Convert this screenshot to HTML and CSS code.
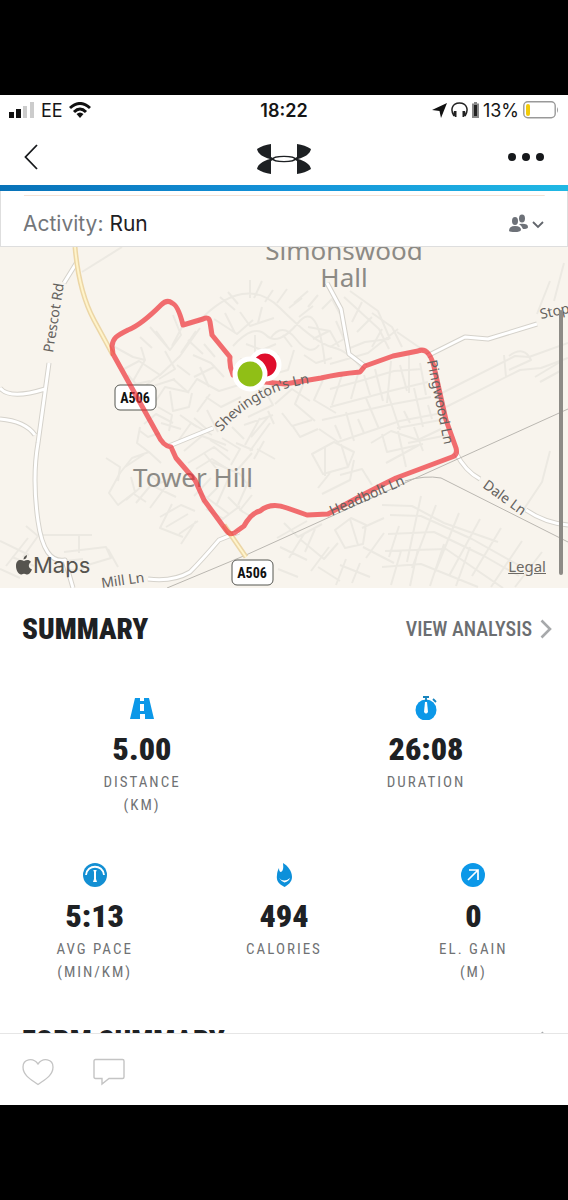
FILE: index.html
```html
<!DOCTYPE html>
<html lang="en">
<head>
<meta charset="utf-8">
<meta name="viewport" content="width=device-width, initial-scale=1">
<title>Run summary</title>
<link rel="stylesheet" href="styles.css">
</head>
<body>
<div class="app">
  <header class="top">
    <div class="status">
      <div class="status-side">
        <svg width="26" height="16" viewBox="0 0 26 16" aria-hidden="true"><path d="M0 10h5v6H0zM7 7h5v9H7z" fill="#111"/><path d="M14 4h4v12h-4zM21 0h4v16h-4z" fill="#ccc"/></svg>
        <span>EE</span>
        <svg class="wifi" width="22" height="16" viewBox="0 0 22 16" aria-hidden="true"><g fill="none" stroke="#111" stroke-width="3"><path d="M1 6Q11-3 21 6"/><path d="M5 10Q11 4 17 10"/></g><path d="M7.500 12Q11 9 14.500 12L11 16z" fill="#111"/></svg>
      </div>
      <time class="clock">18:22</time>
      <div class="status-side status-right">
        <svg width="15" height="15" viewBox="0 0 15 15" aria-hidden="true"><path d="M15 0L9 15 7.500 8 0 7z" fill="#111"/></svg>
        <svg width="17" height="16" viewBox="0 0 17 16" aria-hidden="true"><path d="M3 14C-1 8 1 1 8.500 1S18 8 14 14" fill="none" stroke="#222" stroke-width="1.500"/><path d="M3 9h2.500v6H4L2 12zM14 9h-2.500v6H13l2-3z" fill="#222"/></svg>
        <svg width="7" height="16" viewBox="0 0 7 16" aria-hidden="true"><path d="M2 0h3v1.500h2V16H0V1.500h2z" fill="#888"/><path d="M2 3h3v11H2z" fill="#222"/></svg>
        <span>13%</span>
        <svg width="36" height="18" viewBox="0 0 36 18" aria-hidden="true"><rect x=".8" y=".8" width="31.400" height="16" rx="4" fill="#fff" stroke="#999" stroke-width="1.400"/><rect x="3" y="3" width="4" height="12" rx="2" fill="#f2cb0a"/><path d="M34 6q2 3 0 6z" fill="#999"/></svg>
      </div>
    </div>
    <nav class="nav">
      <button class="icon-button" aria-label="Back"><svg width="14" height="26" viewBox="0 0 14 26"><path d="M13 1L1.500 13 13 25" fill="none" stroke="#16181b" stroke-width="1.800"/></svg></button>
      <svg class="logo" width="54" height="32" viewBox="0 0 54 32" role="img" aria-label="Under Armour"><path d="M14 1Q6 2 0 6C1 11 6 14 13 16 6 18 1 21 0 26Q6 30 14 31V18L18 16 14 14zM40 1Q48 2 54 6C53 11 48 14 41 16 48 18 53 21 54 26Q48 30 40 31V18L36 16 40 14z" fill="#1d2023"/><ellipse cx="27" cy="16" rx="11" ry="2.600" fill="none" stroke="#1d2023" stroke-width="1.300"/></svg>
      <button class="icon-button" aria-label="More options"><svg width="36" height="8" viewBox="0 0 36 8"><g fill="#16181b"><circle cx="4" cy="4" r="4"/><circle cx="18" cy="4" r="4"/><circle cx="32" cy="4" r="4"/></g></svg></button>
    </nav>
  </header>

  <main class="content">
    <section class="activity">
      <p class="activity-name"><span>Activity:</span> Run</p>
      <button class="icon-button" aria-label="Who can see this"><svg width="36" height="20" viewBox="0 0 36 20"><g fill="#6d7178"><ellipse cx="7" cy="7" rx="3" ry="4"/><ellipse cx="14" cy="4.500" rx="3" ry="4"/><path d="M1 17Q1 12 7 12T13 16Q12 18 7 18T1 17zM11 10q9-1 9 3 0 2-5 2-1-3-4-5z"/></g><path d="M25 8l5 5 5-5" fill="none" stroke="#62666c" stroke-width="1.800"/></svg></button>
    </section>

    <section class="map" aria-label="Route map">
      <svg class="map-art" viewBox="0 0 568 341">
        <defs>
          <path id="shevington" d="M221 185Q258 143 312 136"/>
          <path id="pingwood" d="M427 114L446 206"/>
          <path id="headbolt" d="M332 269L408 236"/>
        </defs>
        <g class="minor">
          <path d="M82 25L122 0M113 99l20 11 12 3M124 122l15-8 21 14 20-19 20-28M133 134l12-21-4-13M140 90l12 11M156 84l11 15M150 80l20 23 11-15-8-20M182 80l-10 19M188 93l15 14M177 118l13 10M160 128l-14 10M165 104l10 18-16 10M194 130l20-10M150 140l25-8M155 155l10-15 23 5 9-13 22 12 20-6"/>
          <path d="M128 128l8 9 14-3M170 144l3 20 16-4 3-14M158 160l14 8-3 16M180 168l17 12M200 120l9 20M193 108l18 8 13 14M204 97l11 13M196 84l-15 22M173 132l16 14M206 150l15 10 20-10M197 165l13-18M161 176l20 6"/>
          <path d="M198 75Q245 26 280 61T332 100 362 122M220 50l15 13M228 45l10 12M250 33v18M262 34l-8 17M273 43l-8 12M287 42l-10 14M289 61l13-10M299 70l14-11M214 72l23 15 16-14M225 66l10 20M233 99Q254 76 266 88T298 76 325 117M255 88v28M270 92q12-18 26 0t23 6M278 107l-10 17M294 103l-6 20-22 6M322 62l10-10 8 15M350 44l28 20 12 28M344 50l35 32 10 20M362 55l-10 20M372 70l-15 15M382 82l-10 18M330 117l38-11 30-24M397 85l26 18"/>
          <path d="M240 65l10 14 24-8M262 60l-4 16M308 80l22 4 9 16M313 92l16-8M246 97l16 6 14-6M304 108l12 8 16-5M283 88l9 12M336 74l8 18-14 8M318 48l-10 12M308 44l-14 12M240 112l20 4 10 9M345 103l20-8 24-3M402 100l-10-20-20-14"/>
          <path d="M263 140l10 18-25 12M275 157l17-15 18 12M303 138l-8 19 20 17M323 133l-9 20 22 13M342 128l-10 30M358 127l-7 25M375 122l8 32M391 114l-4 42M409 108v38M330 160l64-17 34-8M322 173l71-16 38-7M319 182l19 13 62-21 42-8M346 165l8 29M366 151l13 31M388 147l12 36M414 141l9 39M397 181l49-9M408 196l40-8"/>
          <path d="M330 142l30-8 34-10 28-2M364 128l6 20M400 118l7 26M420 116l6 32M282 166l10 13 20-6M292 178l8 12 18-8M268 164l6 13M335 178l6 14M358 172l6 14M404 164l6 12M428 158l4 14"/>
          <path d="M144 177l12-10 17 9M140 180l-3 16 12 9-17 6-12 15-11 20 9 12 17-13-4-15M125 220l24-16M149 205l12 11M136 256l15-18 25 12M142 239l-16 14M150 261l17-23M160 270l21-12 14 6M172 257l-12 24 23 9M188 267l-22 13M179 287l19-13M181 297l15-23M199 245l30 22M211 231l-17 18M218 240l-16 16M230 228l-14 31M240 259l-20 15M250 231l-12 27M184 204l18-15 24 9M188 216l26-16 16 13M176 197l15-21 21 12M194 171l16 14M207 163l11 22M244 178l29-10M260 171l-15 27M251 190l17-20M257 202l18 10M270 176l-20 28M236 196l17 7M212 215l28 12 11 15"/>
          <path d="M106 211l14 9-2 14M140 184l8 6 12-4M196 222l16-10 14 9M204 206l12 15M222 191l18 11-9 16M228 204l-18-11M238 222l14-16M232 180l12 12M264 194l-10 18M150 228l10 8 12-5M134 247l12 8M206 262l18 10M228 250l15 15M252 248l-12 15 10 6"/>
          <path d="M312 207l22-12 20 10-6 15-25 7zM325 200v29M341 197l7 23M340 228l22-6 10 16M322 247l28-14 4-20M330 226l-12 15M371 196l20-12 27 9 23-11M382 187l5 18 36-8M398 184l8 36M414 180l9 24M386 216l33-18"/>
          <path d="M335 283l16-12 15 7-3 19-18 4zM350 272l8 26M362 281l22-10M277 291l30-17M284 276l14 14 24-13M289 311l15-24M280 300l27 13M301 293l23 19 14-16M315 282l-10 23M329 300l-18 24M363 300l31 16M384 286l-18 25M399 279l-10 31M382 258l30 1 32 17 54 19M390 268l31 1 51 23 48 27M388 287l46-2 50 24 35 20M385 304l61-2 57 39M382 320l39-3 57 23M421 249l-14 66M436 258l-24 63M459 266l-24 59M480 272l-31 57M501 281l-29 48M522 294l-31 46M542 305l-27 35M391 338l10-34M410 339l8-37M430 339l14-42M456 339l14-39"/>
          <path d="M26 279l12 10-15 21M0 294l29 14M6 319l22-28M43 288h49M79 288v18M64 305l42-5 5 11-30 9M57 315l26-3M46 325l38-3M0 322l20 9M12 310l22 9M108 302l10 18M318 320l22 14M346 312l-10 26M360 316l-8 20M340 318l30 12M278 322l20 8"/>
          <path d="M438 148l77-39 14 1 39-14M446 160l74-37 21-2 27-10M504 108l2 22M509 109q15-11 22 4l-22 10M554 54l10-38M560 115l-25 15M562 123l-22 12M550 34l-13 33M550 204l-8 31-20 30"/>
        </g>
        <g class="road-edge">
          <path d="M77 15L64 36M49 116L38 196Q32 231 38 274T65 313L73 341M0 141Q10 153 45 142M0 172Q25 174 35 188M327 36L341 62 349 107 366 120M427 109L465 90 488 92 537 77M169 199L213 181M456 206Q465 224 480 232M526 263Q545 276 568 278M148 332Q173 335 190 325 202 313 219 293L239 285"/>
        </g>
        <g class="road">
          <path d="M77 15L64 36M49 116L38 196Q32 231 38 274T65 313L73 341M0 141Q10 153 45 142M0 172Q25 174 35 188M327 36L341 62 349 107 366 120M427 109L465 90 488 92 537 77M169 199L213 181M456 206Q465 224 480 232M526 263Q545 276 568 278M148 332Q173 335 190 325 202 313 219 293L239 285"/>
        </g>
        <path class="rail" d="M167 341L246 308 568 162M405 234Q425 228 441 231L568 295"/>
        <path class="main-edge" d="M75 0Q79 45 94 73L113 108M224 278L246 310"/>
        <path class="main-road" d="M75 0Q79 45 94 73L113 108M224 278L246 310"/>
        <g class="badge">
          <rect x="115" y="138" width="41" height="25" rx="5"/><text x="135" y="156">A506</text>
          <rect x="232" y="313" width="41" height="25" rx="5"/><text x="252" y="331">A506</text>
        </g>
        <g class="place"><text x="344" y="13">Simonswood</text><text x="344" y="40">Hall</text><text x="193" y="240">Tower Hill</text></g>
        <path class="route" d="M233 128Q229 119 230 110L212 88 210 75Q209 69 203 72L183 78Q178 58 172 56 167 52 161 58 141 78 128 83C116 89 113 91 112 99L113 107 158 188Q163 199 171 200L176 211 195 233 204 253 226 283Q231 290 237 284L244 279Q251 266 260 264 271 255 287 261L307 268 328 267Q365 246 396 231L452 210Q458 208 456 201L446 173 435 124Q430 99 418 104L393 109 365 119 360 125Q338 127 321 131L285 137 254 134"/>
        <g class="road-name">
          <text transform="translate(53 106) rotate(-81)">Prescot Rd</text>
          <text><textPath href="#shevington">Shevington's Ln</textPath></text>
          <text><textPath href="#pingwood">Pingwood Ln</textPath></text>
          <text><textPath href="#headbolt">Headbolt Ln</textPath></text>
          <text transform="translate(482 240) rotate(36)">Dale Ln</text>
          <text transform="translate(102 341) rotate(-8)">Mill Ln</text>
          <text transform="translate(541 72) rotate(-12)">Stop</text>
        </g>
        <g class="pins"><circle cx="265" cy="118" r="14" fill="#df0d2c"/><circle cx="250" cy="127" r="15" fill="#90bf16"/></g>
      </svg>
      <div class="map-credit"><svg width="16" height="20" viewBox="0 0 16 20" aria-hidden="true"><path d="M11 0Q11 4 7.500 4.500 7.500 1 11 0zM8 6C10 5 13 4 15 7 12 9 12 13 16 14.500 14 19 12 20 10.500 19.500 8.500 18.500 7.500 18.500 5.500 19.500 3 20 0 16 0 11 0 5 4 4 8 6z" fill="#56544f"/></svg><span>Maps</span></div>
      <a class="legal" href="#legal">Legal</a>
      <span class="thumb"></span>
    </section>

    <section class="summary">
      <div class="section-head">
        <h2>SUMMARY</h2>
        <a class="analysis" href="#analysis">VIEW ANALYSIS <svg width="12" height="20" viewBox="0 0 12 20" aria-hidden="true"><path d="M1.500 1.500L10 10 1.500 18.500" fill="none" stroke="#a7a9ab" stroke-width="2.600"/></svg></a>
      </div>
      <div class="stats">
        <div class="stat">
          <svg width="24" height="24" viewBox="0 0 24 24" aria-hidden="true"><path fill="#0c98e8" fill-rule="evenodd" d="M5 2H10V5H14V2H19L24 23H15V18H10V23H0zM10 8V15H14V8z"/></svg>
          <strong>5.00</strong><p>DISTANCE<br>(KM)</p>
        </div>
        <div class="stat">
          <svg width="24" height="24" viewBox="0 0 24 24" aria-hidden="true"><circle cx="12" cy="14" r="10.500" fill="#0c98e8"/><path d="M9 1h6M12 1v4M19 3l3 3" fill="none" stroke="#1683bd" stroke-width="1.800"/><path d="M11 6h2l1 10q-2 3-4 0z" fill="#fff"/></svg>
          <strong>26:08</strong><p>DURATION</p>
        </div>
      </div>
      <div class="stats">
        <div class="stat">
          <svg width="24" height="24" viewBox="0 0 24 24" aria-hidden="true"><circle cx="12" cy="12" r="12" fill="#138fd3"/><path d="M3 12C4 1 20 1 21 12" fill="none" stroke="#fff" stroke-width="1.800"/><path d="M10.300 7h3.400l-.7 2v7l1 3h-4l1-3V9z" fill="#fff"/></svg>
          <strong>5:13</strong><p>AVG PACE<br>(MIN/KM)</p>
        </div>
        <div class="stat">
          <svg width="24" height="24" viewBox="0 0 24 24" aria-hidden="true"><path d="M11 0C16 3 20 8 20 14 20 19 16 22 12.500 24 7 21 4 18 5 12 5 9 6 7 7 5Q7 9 9 9 12 8 11 0z" fill="#0d90da"/><path d="M7 15Q12 20 18 15 17 18 12.500 19.500 9 18 7 15z" fill="#fff"/></svg>
          <strong>494</strong><p>CALORIES</p>
        </div>
        <div class="stat">
          <svg width="24" height="24" viewBox="0 0 24 24" aria-hidden="true"><circle cx="12" cy="12" r="12" fill="#0c98e8"/><path d="M8 7h9v10M17 7L7 17" fill="none" stroke="#fff" stroke-width="1.700"/></svg>
          <strong>0</strong><p>EL. GAIN<br>(M)</p>
        </div>
      </div>
    </section>
    <section class="form">
      <div class="section-head"><h2>FORM SUMMARY</h2><svg width="12" height="20" viewBox="0 0 12 20" aria-hidden="true"><path d="M1.500 1.500L10 10 1.500 18.500" fill="none" stroke="#a7a9ab" stroke-width="2.600"/></svg></div>
    </section>
  </main>

  <footer class="actions">
    <button class="icon-button" aria-label="Like"><svg width="32" height="28" viewBox="0 0 32 28"><path d="M16 26.500C10 22 1 18 1 9 1 1 11-1 16 6 21-1 31 1 31 9 31 18 22 22 16 26.500z" fill="none" stroke="#c4c4c4" stroke-width="1.300"/></svg></button>
    <button class="icon-button" aria-label="Comment"><svg width="32" height="28" viewBox="0 0 32 28"><path d="M2.500 1.500h27q1.500 0 1.500 1.500v16q0 1.500-1.500 1.500H16L9 26v-5.500H2.500Q1 20.500 1 19V3q0-1.500 1.500-1.500z" fill="none" stroke="#c4c4c4" stroke-width="1.400"/></svg></button>
  </footer>
</div>
</body>
</html>
```

FILE: styles.css
```css
* { box-sizing: border-box; }
body {
  margin: 0;
  padding: 95px 0;
  height: 100vh;
  background: #000;
  color: #1e2124;
  font-family: Inter, "Liberation Sans", sans-serif;
}
h2, p { margin: 0; }
svg { display: block; flex: none; }
.app {
  display: flex;
  flex-direction: column;
  height: 100%;
  background: #fff;
}
.top { border-bottom: 6px solid; border-image: linear-gradient(90deg, #0872b8, #1492d8 50%, #20b8e4) 1; }
.status {
  display: grid;
  grid-template-columns: 1fr auto 1fr;
  align-items: center;
  height: 30px;
  padding: 0 9px;
  color: #161616;
  font-size: 18px;
}
.status-side { display: flex; align-items: center; gap: 6px; }
.status-right { justify-content: flex-end; gap: 4px; }
.clock { font-weight: 600; }
.nav {
  display: grid;
  grid-template-columns: 1fr auto 1fr;
  align-items: center;
  height: 60px;
  padding: 4px 24px 0;
}
.logo { margin-top: 4px; }
.nav .icon-button:last-child { justify-self: end; }
.nav .icon-button:first-child { justify-self: start; }
.icon-button { padding: 0; border: 0; background: none; }
.content { flex: 1; min-height: 0; overflow: hidden; }
.activity {
  display: flex;
  align-items: center;
  justify-content: space-between;
  height: 56px;
  padding: 10px 23px 0 22px;
  border: solid #dedede;
  border-width: 0 1px 1px;
  background: linear-gradient(#f4e2d6, #f4e2d6) center 4px / 92% 1px no-repeat;
}
.activity-name { font-size: 21px; }
.activity-name span { color: #73767a; }
.map { position: relative; overflow: hidden; background: #f8f4ed; }
.map-art { width: 100%; height: auto; }
.map-art path { fill: none; stroke-linejoin: round; }
.minor { stroke: #ece9e2; stroke-width: 2; }
.road-edge { stroke: #d5d2cb; stroke-width: 5; }
.road { stroke: #fff; stroke-width: 3; }
.rail { stroke: #bab7b1; stroke-width: 1; }
.main-edge { stroke: #ecd6a6; stroke-width: 5; }
.main-road { stroke: #fff4cb; stroke-width: 2; }
.route { stroke: #ee2b32; stroke-width: 5; stroke-opacity: .68; stroke-linecap: round; }
.badge rect { fill: #fff; stroke: #555651; stroke-width: 1; }
.badge text { fill: #111; font: bold 14px "Roboto Condensed", "Liberation Sans Narrow", Roboto, sans-serif; text-anchor: middle; }
.place { fill: #8c8a85; font: 26px "Noto Sans", sans-serif; text-anchor: middle; }
.road-name { fill: #65625e; font: 14px "Noto Sans", sans-serif; }
.pins circle { stroke: #fff; stroke-width: 5; }
.map-credit {
  position: absolute;
  bottom: 10px;
  left: 16px;
  display: flex;
  align-items: center;
  gap: 1px;
  color: #56544f;
  font-size: 22px;
}
.legal { position: absolute; right: 22px; bottom: 12px; color: #6d6a65; font: 15px/20px "Noto Sans", sans-serif; }
.thumb { position: absolute; top: 63px; right: 5px; bottom: 13px; width: 4px; border-radius: 2px; background: #8d8b86; }
.summary, .form { font-family: "Roboto Condensed", "Liberation Sans Narrow", Roboto, sans-serif; }
.section-head {
  display: flex;
  align-items: center;
  justify-content: space-between;
  height: 82px;
  padding: 0 16px 0 22px;
}
.section-head h2 { font-size: 29px; font-weight: 900; line-height: 36px; }
.analysis { display: flex; align-items: center; gap: 8px; color: #6b6e71; font-size: 20px; font-weight: 500; text-decoration: none; }
.stats { display: flex; padding: 26px 0 20px; }
.stats:last-child { padding-bottom: 16px; }
.stat { display: flex; flex: 1; flex-direction: column; align-items: center; text-align: center; }
.stat strong { margin: 11px 0 4px; font-size: 32px; font-weight: 900; line-height: 36px; }
.stat p { color: #707274; font-size: 15px; line-height: 23px; letter-spacing: 2px; }
.actions {
  display: flex;
  flex: none;
  align-items: center;
  gap: 39px;
  height: 72px;
  padding: 4px 22px 0;
  border-top: 1px solid #e6e6e6;
}
```
